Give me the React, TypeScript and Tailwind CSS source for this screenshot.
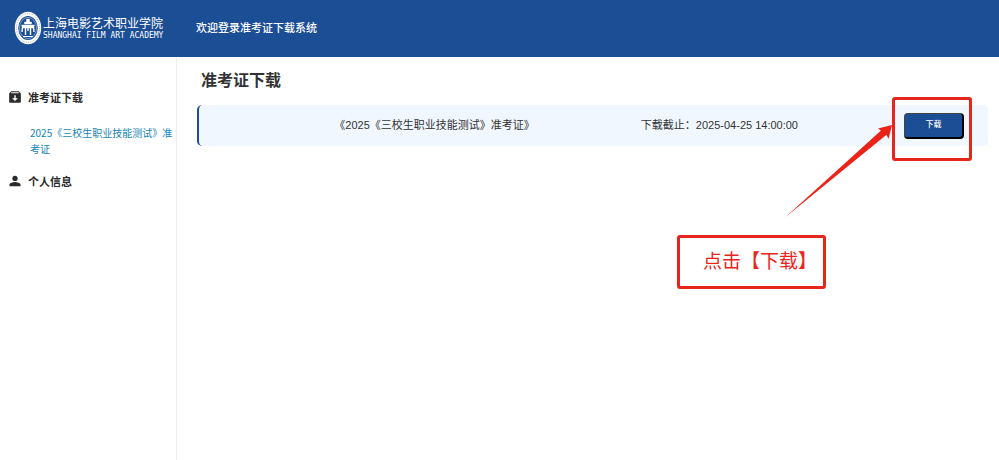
import type { ReactNode } from 'react';

function SchoolLogo() {
    return (
        <div className="flex items-center gap-px text-white">
            <svg viewBox="0 0 28 34" className="h-[34px] w-7 shrink-0" fill="none" stroke="currentColor">
                <ellipse cx="14" cy="17" rx="13.2" ry="16.2" fill="currentColor" stroke="none" />
                <ellipse cx="14" cy="17" rx="11.6" ry="14.4" stroke="#1c4e95" strokeWidth="1" strokeDasharray="1.2 1.2" opacity="0.4" />
                <ellipse cx="14" cy="17" rx="9.8" ry="12" fill="#1c4e95" stroke="none" />
                <ellipse cx="14" cy="17" rx="8.6" ry="10.6" strokeWidth="0.6" opacity="0.7" />
                <path d="M12.500 8h3v3h-3zM10.500 11h7v2h-7zM7.500 14h13l-1 3h-11z" fill="currentColor" strokeWidth="0.4" />
                <path d="M8.500 16l-.5 5M11.500 17v7M14 17v3M16.500 17v7M19.500 16l.5 5" strokeWidth="1.400" />
                <path d="M9 25.500h10" strokeWidth="1" />
            </svg>
            <div className="whitespace-nowrap">
                <div className="font-['Noto_Sans_CJK_SC',sans-serif] text-[12px] leading-[16px]">上海电影艺术职业学院</div>
                <div className="font-['DejaVu_Sans_Mono',monospace] text-[8px] leading-[9px]">SHANGHAI FILM ART ACADEMY</div>
            </div>
        </div>
    );
}

function ArchiveIcon() {
    return (
        <svg viewBox="0 0 24 24" className="size-[14px]" fill="currentColor">
            <path
                fillRule="evenodd"
                d="M5.500 2h13L22 6v14c0 1.100-.9 2-2 2H4c-1.100 0-2-.9-2-2V6zM5 5.500h14l-1-1.500H6zM10.800 9v5H7l5 5 5-5h-3.800V9z"
            />
        </svg>
    );
}

function PersonIcon() {
    return (
        <svg viewBox="0 0 24 24" className="size-[14px]" fill="currentColor">
            <circle cx="12" cy="7.500" r="4.500" />
            <path d="M12 13.500c-3.500 0-9.500 1.500-9.500 4.800V21h19v-2.700c0-3.300-6-4.800-9.500-4.800z" />
        </svg>
    );
}

function MenuLink({ icon, children }: { icon: ReactNode; children: ReactNode }) {
    return (
        <a href="#" className="flex items-center gap-[6px] pl-2 text-[11px] leading-4 font-bold text-[#2b2b2b]">
            {icon}
            <span>{children}</span>
        </a>
    );
}

export default function App() {
    return (
        <div className="flex min-h-screen flex-col bg-white font-['Noto_Sans_CJK_SC',sans-serif] text-[#333]">
            <header className="flex h-[57px] items-center bg-[#1c4e95] pb-[2px]">
                <div className="w-[196px] shrink-0 pl-[14px]">
                    <SchoolLogo />
                </div>
                <h1 className="text-[11px] font-medium text-white">欢迎登录准考证下载系统</h1>
            </header>

            <div className="flex flex-1">
                <nav className="w-[177px] shrink-0 border-r border-[#ededed] pt-8">
                    <MenuLink icon={<ArchiveIcon />}>准考证下载</MenuLink>
                    <a href="#" className="mt-5 mb-4 block pl-[30px] text-[10px] leading-4 text-[#1685b5]">
                        2025《三校生职业技能测试》准考证
                    </a>
                    <MenuLink icon={<PersonIcon />}>个人信息</MenuLink>
                </nav>

                <main className="min-w-0 flex-1 pt-[10px] pr-[11px] pl-5">
                    <h2 className="pl-1 text-[16px] leading-6 font-bold">准考证下载</h2>

                    <div className="mt-[14px] flex h-[41px] items-center justify-end gap-[106px] rounded-[5px] border-l-2 border-[#1c4e95] bg-[#f0f7ff] pr-6 font-['Liberation_Sans','Noto_Sans_CJK_SC',sans-serif] text-[11px] whitespace-nowrap">
                        <span>《2025《三校生职业技能测试》准考证》</span>
                        <span>下载截止：2025-04-25 14:00:00</span>
                        <div className="relative">
                            <button
                                type="button"
                                className="block h-[26px] w-[60px] rounded-[4px] border border-t-[#444] border-r-2 border-r-black border-b-2 border-b-black border-l-[#444] bg-[#1c4e95] text-[8px] font-medium text-white"
                            >
                                下载
                            </button>

                            {/* highlight frame, arrow and hint */}
                            <div className="pointer-events-none absolute -top-4 -left-3 h-16 w-20 rounded-[3px] border-3 border-[#e8251c]" />
                            <svg viewBox="0 0 110 94" className="pointer-events-none absolute top-[12px] -left-[121px] h-[94px] w-[110px]">
                                <path d="M2 92.500 98 5.500 95 3.500 109 0 105.500 14 103.500 9.800z" fill="#ec2318" />
                            </svg>
                            <div className="pointer-events-none absolute top-[122px] -left-[227px] flex h-[54px] w-[149px] items-center rounded-[3px] border-3 border-[#e8251c] pt-[2px] pl-[23px] text-[19px] text-[#e8251c]">
                                点击【下载】
                            </div>
                        </div>
                    </div>
                </main>
            </div>
        </div>
    );
}
